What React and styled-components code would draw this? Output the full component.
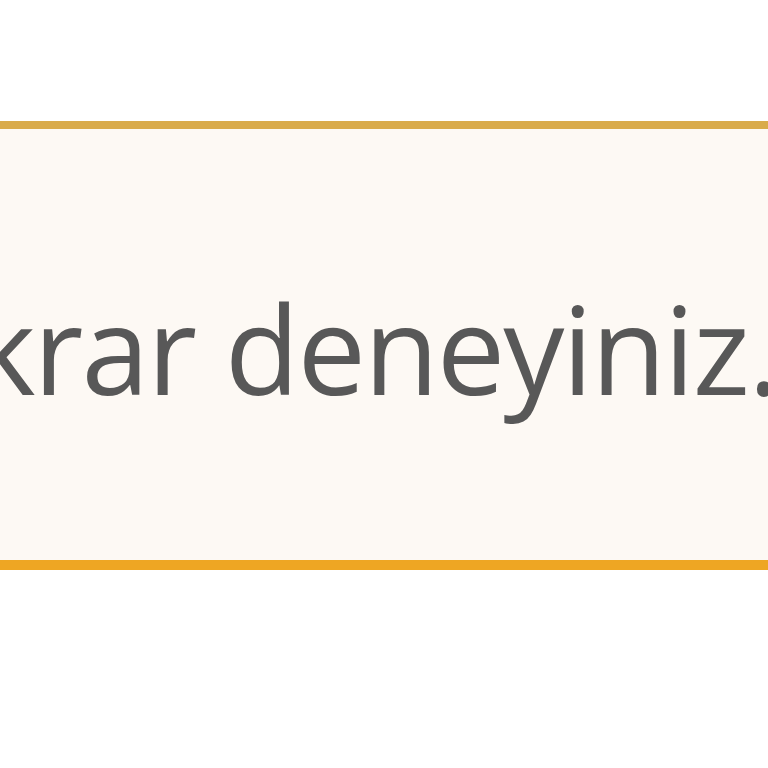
import { createGlobalStyle, styled } from "styled-components";

const GlobalStyle = createGlobalStyle`
  html, body {
    margin: 0;
    padding: 0;
    background: #ffffff;
  }
  body {
    font-family: "Open Sans", "Noto Sans", sans-serif;
    overflow: hidden;
  }
`;

const Page = styled.div`
  width: 768px;
  height: 768px;
  padding-top: 121px;
  box-sizing: border-box;
  overflow: hidden;
`;

const Notice = styled.div`
  height: 449px;
  box-sizing: border-box;
  background: #fdf9f4;
  border-top: 8px solid #d9ab4b;
  border-bottom: 10px solid #eea623;
  display: flex;
  justify-content: flex-end;
  align-items: flex-start;
  padding-top: 136px;
  overflow: hidden;
`;

const Message = styled.p`
  margin: 0 -10px 0 0;
  font-size: 122px;
  letter-spacing: -2px;
  line-height: normal;
  color: #585858;
  white-space: nowrap;
`;

function App() {
  return (
    <Page>
      <GlobalStyle />
      <Notice>
        <Message>Lütfen daha sonra tekrar deneyiniz.</Message>
      </Notice>
    </Page>
  );
}

export default App;
